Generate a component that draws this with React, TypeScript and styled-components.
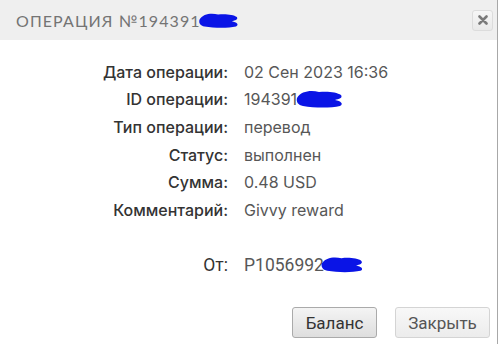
import React from "react";
import styled, { createGlobalStyle } from "styled-components";

const GlobalStyle = createGlobalStyle`
  html, body {
    margin: 0;
    padding: 0;
    background: #ffffff;
  }
`;

const Dialog = styled.div`
  width: 497px;
  height: 344px;
  border-right: 1px solid #a8a8a8;
  background: #ffffff;
  display: flex;
  flex-direction: column;
  overflow: hidden;
`;

const Header = styled.div`
  height: 40px;
  flex: 0 0 40px;
  background: #efefef;
  display: flex;
  align-items: center;
  justify-content: space-between;
  padding: 0 4px 0 16px;
`;

const Title = styled.div`
  display: flex;
  align-items: center;
  font-family: Lato, "Open Sans", sans-serif;
  font-size: 16px;
  letter-spacing: 1.1px;
  color: #747474;
  text-transform: uppercase;
`;

const CloseButton = styled.button`
  width: 21px;
  height: 21px;
  padding: 0;
  border: 1px solid #dcdcdc;
  border-radius: 3px;
  background: linear-gradient(#f6f6f6, #e9e9e9);
  display: flex;
  align-items: center;
  justify-content: center;
  cursor: pointer;
`;

const Scribble = styled.svg<{ $shift: number }>`
  display: block;
  margin-left: ${({ $shift }) => $shift}px;
`;

const Body = styled.div`
  flex: 1;
  display: flex;
  flex-direction: column;
  padding-top: 18px;
`;

const Details = styled.div`
  display: grid;
  grid-template-columns: 228px 1fr;
  column-gap: 16px;
  grid-auto-rows: 27.6px;
  align-items: center;
`;

const Label = styled.div<{ $roboto?: boolean }>`
  text-align: right;
  font-family: ${({ $roboto }) => ($roboto ? "Roboto" : "Inter")}, sans-serif;
  font-size: ${({ $roboto }) => ($roboto ? 17.5 : 16)}px;
  font-weight: ${({ $roboto }) => ($roboto ? 400 : 500)};
  color: #333333;
`;

const Value = styled.div<{ $roboto?: boolean }>`
  display: flex;
  align-items: center;
  font-family: ${({ $roboto }) => ($roboto ? "Roboto" : "Inter")}, sans-serif;
  font-size: ${({ $roboto }) => ($roboto ? 17.5 : 16)}px;
  color: #575757;
`;

const Spacer = styled.div`
  grid-column: 1 / span 2;
`;

const Footer = styled.div`
  margin-top: auto;
  display: flex;
  justify-content: flex-end;
  gap: 18px;
  padding: 0 7px 6px 0;
`;

const Button = styled.button<{ $primary?: boolean }>`
  height: 31px;
  padding: 0 12px;
  min-width: ${({ $primary }) => ($primary ? 85 : 95)}px;
  font-family: Roboto, sans-serif;
  font-size: 17px;
  color: ${({ $primary }) => ($primary ? "#333333" : "#555555")};
  border: 1px solid ${({ $primary }) => ($primary ? "#aaaaaa" : "#d4d4d4")};
  border-radius: 3px;
  background: ${({ $primary }) =>
    $primary
      ? "linear-gradient(#f4f4f4, #dedede)"
      : "linear-gradient(#f8f8f8, #ececec)"};
  cursor: pointer;
`;

const Blot = ({ w, h, shift }: { w: number; h: number; shift: number }) => (
  <Scribble $shift={shift} width={w} height={h} viewBox="0 0 50 20">
    <path
      d="M2 9 C6 2 16 1 24 3 C32 2 42 3 46 6 C48 9 44 10 40 11 C46 12 49 15 45 17 C36 19 20 19 8 17 C3 16 1 13 2 9 Z"
      fill="#0a14e6"
    />
  </Scribble>
);

const rows: [string, React.ReactNode][] = [
  ["Дата операции:", "02 Сен 2023 16:36"],
  [
    "ID операции:",
    <>
      194391
      <Blot w={54} h={20} shift={-4} />
    </>,
  ],
  ["Тип операции:", "перевод"],
  ["Статус:", "выполнен"],
  ["Сумма:", "0.48 USD"],
  ["Комментарий:", "Givvy reward"],
];

export default function App() {
  return (
    <>
      <GlobalStyle />
      <Dialog>
        <Header>
          <Title>
            Операция №194391
            <Blot w={50} h={17} shift={-7} />
          </Title>
          <CloseButton aria-label="Закрыть">
            <svg width="10" height="10" viewBox="0 0 10 10">
              <path
                d="M1.5 1.5 L8.5 8.5 M8.5 1.5 L1.5 8.5"
                stroke="#7a7a7a"
                strokeWidth="2.6"
                strokeLinecap="round"
              />
            </svg>
          </CloseButton>
        </Header>
        <Body>
          <Details>
            {rows.map(([label, value]) => (
              <React.Fragment key={label}>
                <Label>{label}</Label>
                <Value>{value}</Value>
              </React.Fragment>
            ))}
            <Spacer />
            <Label $roboto>От:</Label>
            <Value $roboto>
              P1056992
              <Blot w={45} h={21} shift={-4} />
            </Value>
          </Details>
          <Footer>
            <Button $primary>Баланс</Button>
            <Button>Закрыть</Button>
          </Footer>
        </Body>
      </Dialog>
    </>
  );
}
